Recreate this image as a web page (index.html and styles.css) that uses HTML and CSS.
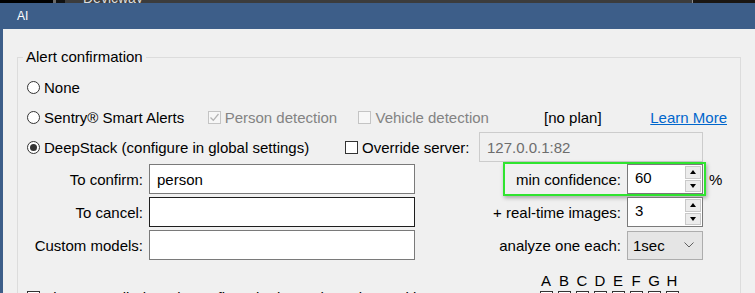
FILE: index.html
```html
<!DOCTYPE html>
<html>
  <head>
    <title>AI</title>
    <link rel="stylesheet" href="styles.css">
  </head>
  <body>
    <div class="desk">
      <span class="desk-a"></span>
      <span class="desk-b"></span>
      <span class="desk-c"></span>
      <span class="desk-d"><span class="desk-text">Devicway</span></span>
      <span class="desk-e"></span>
    </div>
    <div class="window">
      <div class="titlebar">AI</div>
      <div class="client">
        <fieldset class="group">
          <legend>Alert confirmation</legend>

          <div class="row first">
            <label class="opt"><span class="radio"></span>None</label>
          </div>

          <div class="row">
            <label class="opt opt-sentry"><span class="radio"></span>Sentry® Smart Alerts</label>
            <label class="opt opt-person off">
              <span class="check dis">
                <svg width="11" height="11" viewBox="0 0 11 11"><polyline points="1.5,5.5 4.3,8.3 9.5,2" fill="none" stroke="#b4b4b4" stroke-width="1.3"/></svg>
              </span>Person detection</label>
            <label class="opt opt-vehicle off"><span class="check dis"></span>Vehicle detection</label>
            <span class="plan">[no plan]</span>
            <a class="link" href="#">Learn More</a>
          </div>

          <div class="row">
            <label class="opt opt-deep"><span class="radio on"></span>DeepStack (configure in global settings)</label>
            <label class="opt opt-override"><span class="check"></span>Override server:</label>
            <input class="text server" type="text" value="127.0.0.1:82" disabled>
          </div>

          <div class="fields">
            <span class="lbl col1">To confirm:</span>
            <input class="text col2" type="text" value="person">
            <div class="hl">
              <span class="lbl">min confidence:</span>
              <div class="spin">
                <span class="spin-val">60</span>
                <span class="spin-btns"><span class="btn up"></span><span class="btn down"></span></span>
              </div>
            </div>
            <span class="unit">%</span>

            <span class="lbl col1">To cancel:</span>
            <input class="text col2 focus" type="text" value="">
            <span class="lbl col4">+ real-time images:</span>
            <div class="spin col5">
              <span class="spin-val">3</span>
              <span class="spin-btns"><span class="btn up"></span><span class="btn down"></span></span>
            </div>

            <span class="lbl col1">Custom models:</span>
            <input class="text col2" type="text" value="">
            <span class="lbl col4">analyze one each:</span>
            <div class="combo col5">
              <span>1sec</span>
              <svg width="10" height="6" viewBox="0 0 10 6"><polyline points="0.5,0.5 5,5 9.5,0.5" fill="none" stroke="#606060" stroke-width="1"/></svg>
            </div>
          </div>

          <div class="zones">
            <span></span>
            <span class="zl">A</span><span class="zl">B</span><span class="zl">C</span><span class="zl">D</span>
            <span class="zl">E</span><span class="zl">F</span><span class="zl">G</span><span class="zl">H</span>

            <label class="opt zone-opt"><span class="check"></span>Fire "Cancelled" and "Confirmed" alerts when triggered in zones:&nbsp; T</label>
            <span class="zb"></span><span class="zb"></span><span class="zb"></span><span class="zb"></span>
            <span class="zb"></span><span class="zb"></span><span class="zb"></span><span class="zb"></span>
          </div>
        </fieldset>
      </div>
    </div>
  </body>
</html>
```

FILE: styles.css
```css
* {
  box-sizing: border-box;
}
html, body {
  margin: 0;
  height: 293px;
  overflow: hidden;
}
body {
  background: #000;
  font: 15px "Liberation Sans", Arial, sans-serif;
  color: #000;
}

/* strip of desktop behind the dialog */
.desk {
  display: flex;
  align-items: flex-end;
  height: 3px;
  overflow: hidden;
}
.desk span {
  height: 3px;
}
.desk-a { width: 53px; background: #000; }
.desk-b { width: 3px; background: #6a6a6a; }
.desk-c { width: 9px; background: #111; }
.desk-d {
  flex: 1;
  display: flex;
  align-items: flex-end;
  background: #3c3c3c;
  padding-left: 18px;
}
.desk .desk-text {
  height: auto;
  font-size: 14px;
  line-height: 10px;
  color: #dcdcdc;
}
.desk-e { width: 63px; background: #1a1612; border-left: 1px solid #8a8a8a; }

.window {
  border-left: 3px solid #3d5e89;
  height: 290px;
  overflow: hidden;
}
.titlebar {
  height: 26px;
  line-height: 26px;
  padding-left: 14px;
  background: #3d5e89;
  color: #fff;
  font-size: 12px;
}
.client {
  background: #f0f0f0;
  height: 264px;
  padding: 18px 14px 0;
}

.group {
  margin: 0;
  min-width: 0;
  border: 1px solid #dcdcdc;
  padding: 0 13px 0 9px;
  height: 300px;
}
.group legend {
  margin-left: -4px;
  padding: 0 3px;
  line-height: 20px;
}

.row {
  display: flex;
  align-items: center;
  height: 30px;
}
.row.first {
  margin-top: 5px;
}

.opt {
  display: flex;
  align-items: center;
  gap: 4px;
  white-space: nowrap;
}
.opt.off {
  color: #838383;
}
.opt-sentry { width: 182px; }
.opt-person { width: 152px; }
.opt-vehicle { width: 187px; }
.opt-deep { width: 318px; }
.opt-override { width: 134px; }
.plan {
  width: 107px;
  white-space: nowrap;
}
.link {
  color: #0066cc;
  text-decoration: underline;
  white-space: nowrap;
}

.radio {
  width: 13px;
  height: 13px;
  border: 1px solid #333;
  border-radius: 50%;
  background: #fff;
  display: flex;
  align-items: center;
  justify-content: center;
  flex: none;
}
.radio.on::after {
  content: "";
  width: 7px;
  height: 7px;
  border-radius: 50%;
  background: #333;
}
.check {
  width: 13px;
  height: 13px;
  border: 1px solid #333;
  background: #fff;
  display: flex;
  align-items: center;
  justify-content: center;
  flex: none;
}
.check.dis {
  border-color: #c4c4c4;
  background: #f7f7f7;
}

.text {
  height: 30px;
  border: 1px solid #7a7a7a;
  background: #fff;
  font: inherit;
  color: #000;
  padding: 0 7px;
  margin: 0;
  outline: none;
}
.text.focus {
  border-color: #1e1e1e;
}
.text.server {
  width: 224px;
  border-color: #cccccc;
  background: #f0f0f0;
  color: #6d6d6d;
}

.fields {
  display: grid;
  grid-template-columns: 116px 266px 1fr auto 76px 18px;
  grid-auto-rows: 30px;
  column-gap: 6px;
  row-gap: 3px;
  margin-top: 2px;
  align-items: center;
}
.lbl {
  text-align: right;
  white-space: nowrap;
}
.col1 { grid-column: 1; }
.col2 { grid-column: 2; }
.col4 { grid-column: 4; }
.col5 { grid-column: 5; }
.hl {
  grid-column: 4 / 6;
  justify-self: end;
  display: flex;
  align-items: center;
  gap: 6px;
  height: 34px;
  margin: -2px -3px -2px 0;
  padding: 0 1px 0 11px;
  border: 2px solid #2fe42f;
  box-shadow: 1px 2px 4px rgba(0, 0, 0, 0.3);
}
.unit {
  grid-column: 6;
}

.spin {
  width: 76px;
  height: 30px;
  border: 1px solid #7a7a7a;
  background: #fff;
  display: flex;
}
.spin-val {
  flex: 1;
  line-height: 26px;
  padding-left: 7px;
}
.spin-btns {
  width: 17px;
  display: flex;
  flex-direction: column;
  gap: 1px;
  padding: 1px 1px 1px 0;
}
.btn {
  flex: 1;
  background: #ececec;
  border: 1px solid #c9c9c9;
  display: flex;
  align-items: center;
  justify-content: center;
}
.btn.up::after {
  content: "";
  border-left: 3px solid transparent;
  border-right: 3px solid transparent;
  border-bottom: 4px solid #000;
}
.btn.down::after {
  content: "";
  border-left: 3px solid transparent;
  border-right: 3px solid transparent;
  border-top: 4px solid #000;
}

.combo {
  width: 76px;
  height: 29px;
  border: 1px solid #adadad;
  background: #e5e5e5;
  display: flex;
  align-items: center;
  justify-content: space-between;
  padding: 0 8px 0 5px;
}

.zones {
  display: grid;
  grid-template-columns: 510px repeat(8, 18px);
  grid-template-rows: 16px 20px;
  margin-top: 13px;
}
.zl {
  text-align: center;
  line-height: 16px;
}
.zone-opt {
  align-items: flex-start;
  line-height: 18px;
  overflow: hidden;
}
.zone-opt .check {
  margin-top: 2px;
}
.zb {
  justify-self: center;
  width: 13px;
  height: 13px;
  margin-top: 2px;
  border: 1px solid #333;
  background: #fff;
}
```
